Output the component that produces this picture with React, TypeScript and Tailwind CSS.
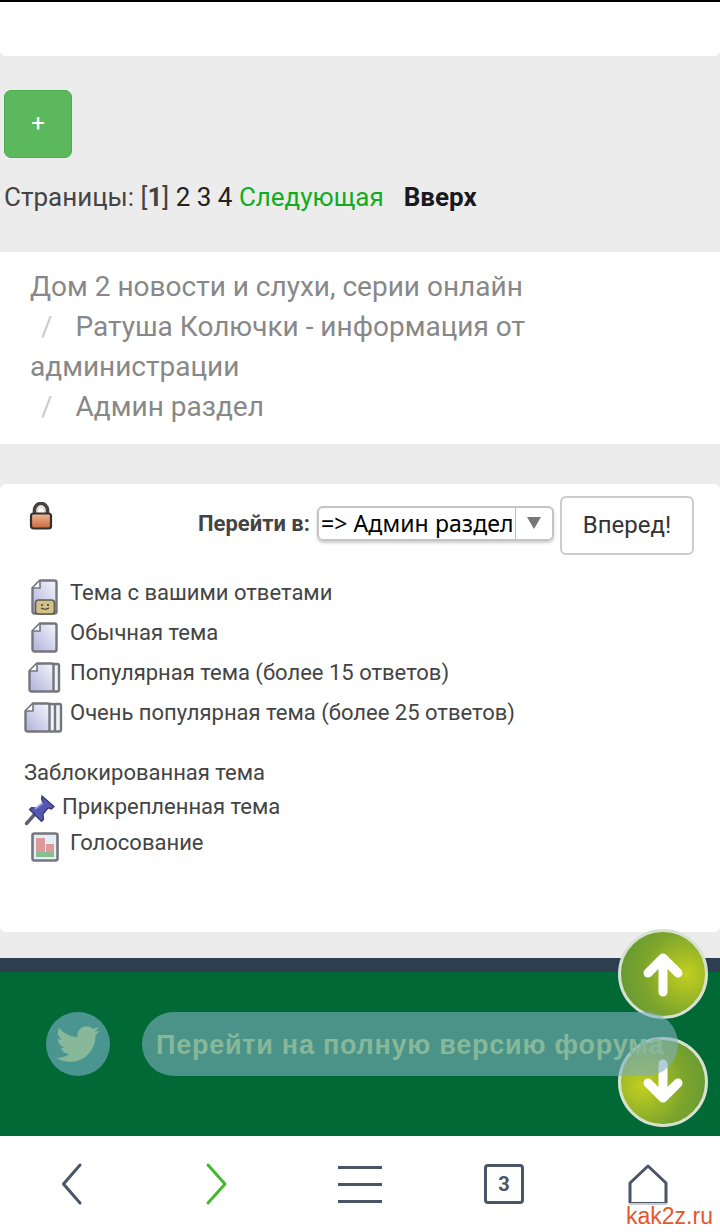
import { FaTwitter } from 'react-icons/fa';

function TopicIcon({ stacks = 0, smile = false }: { stacks?: number; smile?: boolean }) {
  const id = `paper-${stacks}-${smile ? 1 : 0}`;
  const width = 27 + stacks * 6;
  const height = smile ? 36 : 31;
  const bottom = height - 1.5;
  return (
    <svg width={width} height={height} viewBox={`0 0 ${width} ${height}`}>
      <defs>
        <linearGradient id={id} x1="0" y1="1" x2="1" y2="0">
          <stop offset="0" stopColor="#aeb0da" />
          <stop offset="1" stopColor="#f6f7fc" />
        </linearGradient>
      </defs>
      {stacks > 1 && <path d={`M31 2h4.5a1.5 1.5 0 0 1 1.5 1.5v${bottom - 5}a1.5 1.5 0 0 1-1.5 1.5H31`} fill="#f1f2f7" stroke="#75757d" strokeWidth="2.4" />}
      {stacks > 0 && <path d={`M25 2h4.5a1.5 1.5 0 0 1 1.5 1.5v${bottom - 5}a1.5 1.5 0 0 1-1.5 1.5H25`} fill="#f1f2f7" stroke="#75757d" strokeWidth="2.4" />}
      <path d={`M9 1.5h14.5a2 2 0 0 1 2 2v${bottom - 5.5}a2 2 0 0 1-2 2h-20a2 2 0 0 1-2-2V9z`} fill={`url(#${id})`} stroke="#75757d" strokeWidth="2.4" />
      <path d="M9 2v7H2" fill="#fff" stroke="#75757d" strokeWidth="1.6" />
      {smile && (
        <g>
          <rect x="4.5" y="21" width="19" height="14" rx="3" fill="#d2c08a" stroke="#5f5a48" strokeWidth="1.6" />
          <circle cx="11" cy="26" r="1.1" fill="#4a4430" />
          <circle cx="17" cy="26" r="1.1" fill="#4a4430" />
          <path d="M10 29q4 2.5 8 0" stroke="#4a4430" fill="none" strokeWidth="1.1" />
        </g>
      )}
    </svg>
  );
}

function LockIcon() {
  return (
    <svg width="24" height="28" viewBox="0 0 24 28">
      <defs>
        <linearGradient id="lock-body" x1="0" y1="0" x2="0" y2="1">
          <stop offset="0" stopColor="#f0b898" />
          <stop offset="1" stopColor="#c9683a" />
        </linearGradient>
      </defs>
      <path d="M5.5 13V8a6.5 6.5 0 0 1 13 0v5" fill="none" stroke="#44423f" strokeWidth="3.6" />
      <path d="M8.5 11V8.5a3.5 3.5 0 0 1 7 0V11" fill="none" stroke="#cfcfcf" strokeWidth="1.2" />
      <rect x="2" y="11.5" width="20" height="15" rx="2.5" fill="url(#lock-body)" stroke="#33302e" strokeWidth="2.2" />
    </svg>
  );
}

function PinIcon() {
  return (
    <svg width="32" height="32" viewBox="0 0 32 32">
      <path d="M2.5 29.5l9-10" stroke="#5f5f72" strokeWidth="3.4" strokeLinecap="round" />
      <path d="M18 2l12 10.5-2.5 2.5-3.5-1-5 6 .5 5.5-2 2L5.5 15.500l2-2 5.500 .5 6-5.500-1.500-3.500z" fill="#5458b4" stroke="#34366e" strokeWidth="1.2" />
      <path d="M11 15l8-6" stroke="#9a9ee0" strokeWidth="1.6" />
    </svg>
  );
}

function PollIcon() {
  return (
    <svg width="28" height="30" viewBox="0 0 28 30">
      <rect x="1.5" y="1.5" width="25" height="27" rx="2" fill="#e4eff4" stroke="#75757d" strokeWidth="2.6" />
      <rect x="5" y="6" width="9" height="19" fill="#dd9a9a" />
      <rect x="15" y="12" width="8" height="13" fill="#dd9a9a" />
      <rect x="5" y="20" width="18" height="5" fill="#86bd92" />
    </svg>
  );
}

function ScrollCircle({ down = false }: { down?: boolean }) {
  return (
    <div
      className={
        'absolute left-[618px] w-[90px] h-[90px] rounded-full border-[3px] border-[#d6e2cf] flex items-center justify-center z-10 ' +
        (down
          ? 'top-[1037px] bg-[radial-gradient(circle_at_25%_55%,#c3cf1f,#7da52c_55%,#5c9438)]'
          : 'top-[929px] bg-[radial-gradient(circle_at_78%_50%,#c3cf1f,#7da52c_55%,#5c9438)]')
      }
    >
      <svg width="44" height="46" viewBox="0 0 44 46" className={down ? 'rotate-180' : ''}>
        <path d="M22 41V7M7 22L22 7l15 15" fill="none" stroke="#fff" strokeWidth="9" strokeLinecap="round" strokeLinejoin="round" />
      </svg>
    </div>
  );
}

const legend = [
  { icon: <TopicIcon smile />, slot: 'w-[39px] ml-[7px]', label: 'Тема с вашими ответами' },
  { icon: <TopicIcon />, slot: 'w-[39px] ml-[7px]', label: 'Обычная тема' },
  { icon: <TopicIcon stacks={1} />, slot: 'w-[42px] ml-[4px]', label: 'Популярная тема (более 15 ответов)' },
  { icon: <TopicIcon stacks={2} />, slot: 'w-[46px]', label: 'Очень популярная тема (более 25 ответов)' },
];

export default function App() {
  return (
    <div className="relative w-[720px] h-[1232px] overflow-hidden bg-[#ececec] flex flex-col font-['Roboto',sans-serif] text-[#444]">
      <div className="h-[2px] bg-black" />
      <div className="h-[54px] bg-white rounded-b-md" />

      <div className="h-[196px] px-1 pt-[34px]">
        <button className="w-[68px] h-[68px] rounded-[7px] bg-[#5cb85c] border border-[#4cae4c] text-white text-2xl pb-[2px]">+</button>
        <div className="mt-[23px] text-[26px] leading-8 whitespace-nowrap">
          Страницы: [<b>1</b>] <span className="text-[#222]">2 3 4</span> <span className="text-[#12ad1f]">Следующая</span>
          <b className="ml-[20px] text-[#181a1f]">Вверх</b>
        </div>
      </div>

      <div className="h-[192px] bg-white pl-[30px] pr-[180px] pt-[15px] text-[28px] leading-10 text-[#888]">
        <div className="whitespace-nowrap">Дом 2 новости и слухи, серии онлайн</div>
        <div className="whitespace-nowrap"><span className="text-[#ccc] ml-[11px] mr-[23px]">/</span>Ратуша Колючки - информация от</div>
        <div>администрации</div>
        <div className="whitespace-nowrap"><span className="text-[#ccc] ml-[11px] mr-[23px]">/</span>Админ раздел</div>
      </div>

      <div className="h-10 shrink-0" />

      <div className="h-[448px] shrink-0 bg-white rounded-md pl-6 text-[22px]">
        <div className="flex items-start h-[88px]">
          <div className="ml-[5px] mt-[18px]"><LockIcon /></div>
          <div className="ml-[145px] mt-[12px] flex items-start">
            <b className="mt-[15px] leading-[26px] w-[119px] whitespace-nowrap">Перейти в:</b>
            <div className="mt-[10px] w-[237px] h-[35px] flex rounded-md border-2 border-[#c4c4c4] shadow-[0_2px_3px_rgba(0,0,0,0.2)]">
              <span className="w-[197px] border-r border-[#bbb] pl-[2px] text-[23px] tracking-[0.1px] leading-[30px] text-black whitespace-nowrap font-['Noto_Sans',sans-serif]">=&gt; Админ раздел</span>
              <span className="flex-1 flex justify-center pt-[9px]">
                <svg width="14" height="12" viewBox="0 0 14 12"><path d="M0 0h14L7 12z" fill="#777" /></svg>
              </span>
            </div>
            <button className="ml-[6px] w-[134px] h-[59px] rounded-md border-2 border-[#ccc] text-[#333] text-[24px] pb-[2px]">Вперед!</button>
          </div>
        </div>

        <div className="flex flex-col">
          {legend.map((row) => (
            <div key={row.label} className="h-10 flex items-center">
              <div className={`pt-[10px] ${row.slot}`}>{row.icon}</div>
              <span className="whitespace-nowrap">{row.label}</span>
            </div>
          ))}
        </div>
        <div className="mt-[20px] h-10 pt-[1px] leading-10">Заблокированная тема</div>
        <div className="h-[28px] flex items-center">
          <div className="mt-[8px]"><PinIcon /></div>
          <span className="ml-[6px]">Прикрепленная тема</span>
        </div>
        <div className="mt-[2px] h-10 flex items-center">
          <div className="w-[39px] pt-[10px] ml-[7px]"><PollIcon /></div>
          <span>Голосование</span>
        </div>
      </div>

      <div className="h-[26px] shrink-0" />
      <div className="h-[14px] shrink-0 bg-[#2c3e50]" />

      <div className="h-[164px] shrink-0 bg-[#006935] pt-10 pl-[46px] flex items-start gap-8">
        <div className="w-16 h-16 rounded-full bg-[#4a9590] flex items-center justify-center text-[#86b899] text-[44px]">
          <FaTwitter />
        </div>
        <div className="relative z-20 w-[536px] h-16 rounded-[32px] bg-[rgba(125,175,191,0.6)] pl-[14px] pt-[2px] flex items-center font-['Liberation_Sans',sans-serif] font-bold text-[27px] tracking-[0.75px] text-[#86b899] whitespace-nowrap">
          Перейти на полную версию форума
        </div>
      </div>

      <nav className="h-[96px] shrink-0 bg-white grid grid-cols-5 items-center">
        <div className="flex justify-center">
          <svg width="24" height="44" viewBox="0 0 24 44"><path d="M20 3L3.500 22 20 41" fill="none" stroke="#4b5568" strokeWidth="3" strokeLinecap="round" strokeLinejoin="round" /></svg>
        </div>
        <div className="flex justify-center">
          <svg width="24" height="44" viewBox="0 0 24 44"><path d="M4 3l17 19L4 41" fill="none" stroke="#46b82f" strokeWidth="3" strokeLinecap="round" strokeLinejoin="round" /></svg>
        </div>
        <div className="flex flex-col items-center gap-[14px]">
          <div className="w-11 h-[3px] bg-[#4b5568]" />
          <div className="w-11 h-[3px] bg-[#4b5568]" />
          <div className="w-11 h-[3px] bg-[#4b5568]" />
        </div>
        <div className="flex justify-center">
          <div className="w-10 h-10 border-[3px] border-[#4b5568] rounded-sm flex items-center justify-center text-[#4b5568] font-bold text-xl">3</div>
        </div>
        <div className="flex justify-center">
          <svg width="40" height="41" viewBox="0 0 40 41"><path d="M20 2L2 19v20.500h36V19z" fill="none" stroke="#4b5568" strokeWidth="3" strokeLinejoin="round" /></svg>
        </div>
      </nav>

      <ScrollCircle />
      <ScrollCircle down />

      <span className="absolute left-[626px] top-[1203px] z-30 bg-white/70 font-['Liberation_Sans',sans-serif] text-[23px] leading-[26px] text-[#e5572c]">kak2z.ru</span>
    </div>
  );
}
